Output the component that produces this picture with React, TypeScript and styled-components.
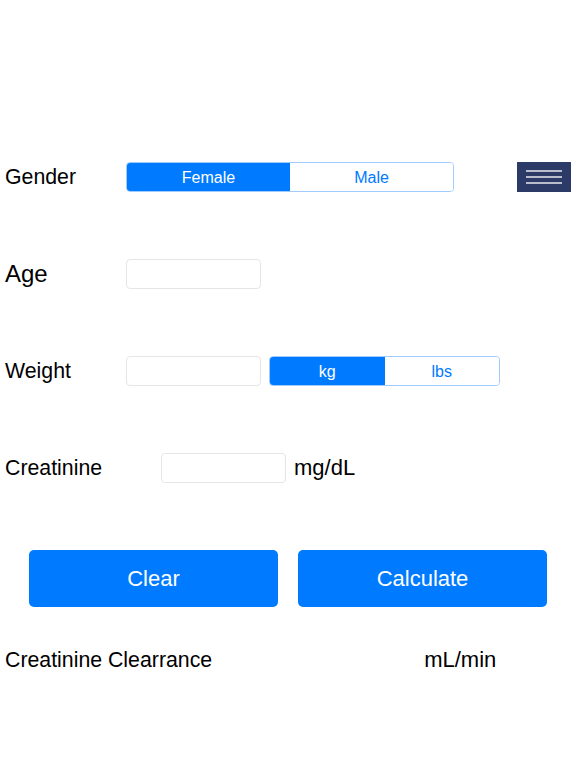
import React, { useState } from 'react';
import styled, { createGlobalStyle } from 'styled-components';

const GlobalStyle = createGlobalStyle`
  body {
    margin: 0;
    background: #ffffff;
    font-family: 'Liberation Sans', Arial, sans-serif;
    color: #000;
  }
`;

const Page = styled.div`
  width: 576px;
  height: 768px;
  padding: 162px 0 0 5px;
  box-sizing: border-box;
  display: flex;
  flex-direction: column;
`;

const Row = styled.div<{ $after: number }>`
  display: flex;
  align-items: center;
  height: 30px;
  margin-bottom: ${p => p.$after}px;
`;

const Label = styled.div<{ $width: number; $size?: number }>`
  width: ${p => p.$width}px;
  flex-shrink: 0;
  font-size: ${p => p.$size ?? 21.3}px;
  line-height: 30px;
`;

const Field = styled.input<{ $width: number }>`
  width: ${p => p.$width}px;
  height: 30px;
  box-sizing: border-box;
  border: 1px solid #e6e6e6;
  border-radius: 4px;
  padding: 0 6px;
  font-size: 16px;
  font-family: inherit;
  outline: none;
`;

const Segmented = styled.div<{ $width: number }>`
  display: flex;
  width: ${p => p.$width}px;
  height: 30px;
  box-sizing: border-box;
  border: 1px solid #9fcbff;
  border-radius: 4px;
  overflow: hidden;
`;

const Segment = styled.button<{ $active: boolean }>`
  flex: 1;
  border: none;
  margin: 0;
  padding: 2px 0 0;
  font-family: inherit;
  font-size: 16px;
  background: ${p => (p.$active ? '#007aff' : '#ffffff')};
  color: ${p => (p.$active ? '#ffffff' : '#007aff')};
  cursor: pointer;
`;

const Gap = styled.div<{ $w: number }>`
  width: ${p => p.$w}px;
  flex-shrink: 0;
`;

const Unit = styled.span`
  font-size: 22px;
`;

const MenuButton = styled.button`
  margin-left: auto;
  margin-right: 5px;
  width: 54px;
  height: 30px;
  background: #2b3a67;
  border: none;
  padding: 0;
  display: flex;
  align-items: center;
  justify-content: center;
  cursor: pointer;
`;

const Actions = styled.div`
  display: flex;
  gap: 20px;
  padding-left: 24px;
  margin-bottom: 38px;
`;

const ActionButton = styled.button`
  width: 249px;
  height: 57px;
  background: #007aff;
  border: none;
  border-radius: 5px;
  color: #ffffff;
  font-family: inherit;
  font-size: 22px;
  cursor: pointer;
`;

const Result = styled.div`
  display: flex;
  align-items: center;
  height: 30px;
  font-size: 21.3px;
`;

const ResultUnit = styled.span`
  margin-left: 212px;
  font-size: 22px;
`;

export default function App() {
  const [gender, setGender] = useState<'female' | 'male'>('female');
  const [unit, setUnit] = useState<'kg' | 'lbs'>('kg');

  return (
    <>
      <GlobalStyle />
      <Page>
        <Row $after={67}>
          <Label $width={121}>Gender</Label>
          <Segmented $width={328}>
            <Segment $active={gender === 'female'} onClick={() => setGender('female')}>Female</Segment>
            <Segment $active={gender === 'male'} onClick={() => setGender('male')}>Male</Segment>
          </Segmented>
          <MenuButton aria-label="menu">
            <svg width="36" height="14" viewBox="0 0 36 14">
              <g stroke="#e8e8ee" strokeWidth="1.6">
                <line x1="0" y1="1" x2="36" y2="1" />
                <line x1="0" y1="7" x2="36" y2="7" />
                <line x1="0" y1="13" x2="36" y2="13" />
              </g>
            </svg>
          </MenuButton>
        </Row>

        <Row $after={67}>
          <Label $width={121} $size={24}>Age</Label>
          <Field $width={135} />
        </Row>

        <Row $after={67}>
          <Label $width={121}>Weight</Label>
          <Field $width={135} />
          <Gap $w={8} />
          <Segmented $width={231}>
            <Segment $active={unit === 'kg'} onClick={() => setUnit('kg')}>kg</Segment>
            <Segment $active={unit === 'lbs'} onClick={() => setUnit('lbs')}>lbs</Segment>
          </Segmented>
        </Row>

        <Row $after={67}>
          <Label $width={156}>Creatinine</Label>
          <Field $width={125} />
          <Gap $w={8} />
          <Unit>mg/dL</Unit>
        </Row>

        <Actions>
          <ActionButton>Clear</ActionButton>
          <ActionButton>Calculate</ActionButton>
        </Actions>

        <Result>
          <span>Creatinine Clearrance</span>
          <ResultUnit>mL/min</ResultUnit>
        </Result>
      </Page>
    </>
  );
}
